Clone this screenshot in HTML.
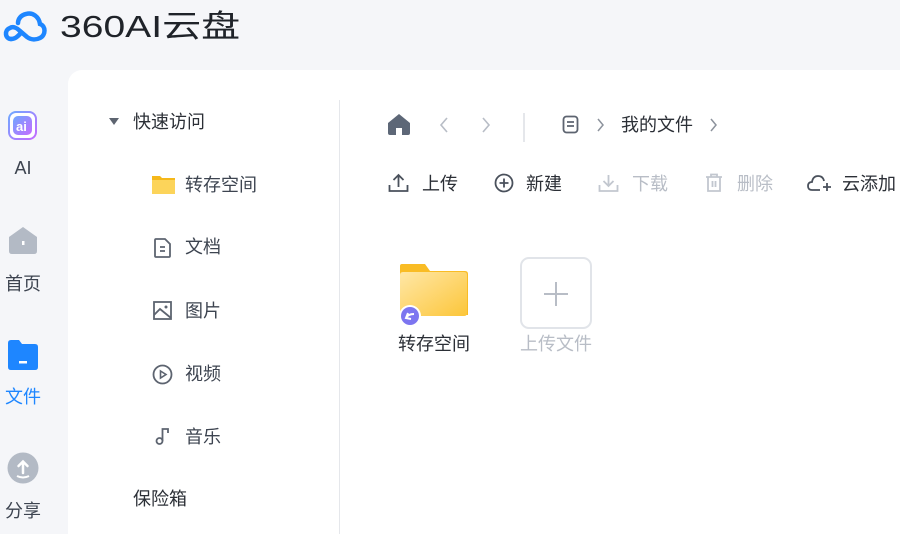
<!DOCTYPE html>
<html><head><meta charset="utf-8"><style>
*{margin:0;padding:0;box-sizing:border-box}
html,body{width:900px;height:534px;overflow:hidden}
body{background:#f5f6f9;font-family:"Liberation Sans","Noto Sans CJK SC",sans-serif;position:relative;color:#2b2f36}
.abs{position:absolute}
.logo{left:60px;top:7px;font-size:31px;font-weight:normal;color:#1f2329;line-height:40px;transform:scaleX(1.26);transform-origin:0 0;white-space:nowrap}
.nav{left:0;width:46px;text-align:center;font-size:18px;line-height:26px;color:#3d4450}
.panel{left:68px;top:70px;width:840px;height:470px;background:#fff;border-top-left-radius:14px}
.div{left:339px;top:100px;width:1px;height:434px;background:#e5e7eb}
.t{font-size:18px;line-height:26px;color:#2b2f36;white-space:nowrap}
.g{color:#b8bdc6}
svg{position:absolute}
</style></head><body>
<svg style="left:3px;top:8px" width="46" height="36" viewBox="0 0 46 34"><path d="M8 30 C2 30 1 21 7 19 C10 17 14 19 17 22 L24 28 C28 31 33 31 37 29 C43 26 43 17 37 15 C36 8 30 3 23 5 C18 6 15 10 15 14" fill="none" stroke="#1e86ff" stroke-width="4.5" stroke-linecap="round"/><path d="M8 30 C12 30 14 28 17 25" fill="none" stroke="#1e86ff" stroke-width="4.5" stroke-linecap="round"/></svg>
<div class="abs logo">360AI云盘</div>

<svg style="left:8px;top:111px" width="30" height="30"><defs><linearGradient id="ai" x1="0" y1="0" x2="1" y2="1"><stop offset="0" stop-color="#6fa8ff"/><stop offset="1" stop-color="#c46bff"/></linearGradient></defs><rect x="1" y="1" width="27" height="27" rx="7" fill="#fff" stroke="url(#ai)" stroke-width="2"/><rect x="5" y="5" width="19" height="19" rx="5" fill="url(#ai)"/><text x="8" y="20" font-size="13" font-weight="bold" fill="#fff" font-family="Liberation Sans">ai</text></svg>
<div class="abs nav" style="top:155px">AI</div>
<svg style="left:8px;top:226px" width="30" height="28"><path d="M1 11 L15 1 L29 11 V25 Q29 28 26 28 H4 Q1 28 1 25Z" fill="#b3bac5"/><rect x="14" y="15" width="2.5" height="4" fill="#fff"/></svg>
<div class="abs nav" style="top:271px">首页</div>
<svg style="left:8px;top:340px" width="30" height="30"><path d="M0 3 Q0 0 3 0 H11 L14 4 H27 Q30 4 30 7 V27 Q30 30 27 30 H3 Q0 30 0 27Z" fill="#1e86ff"/><rect x="11" y="21" width="8" height="2.5" fill="#fff"/></svg>
<div class="abs nav" style="top:384px;color:#1e86ff">文件</div>
<svg style="left:7px;top:452px" width="32" height="32"><circle cx="16" cy="16" r="15.5" fill="#b3bac5"/><path d="M16 21 V10 M11.5 14 L16 9.5 L20.5 14" stroke="#fff" stroke-width="2.5" fill="none" stroke-linecap="round"/><path d="M10 24 Q16 27 22 24" stroke="#fff" stroke-width="2" fill="none"/></svg>
<div class="abs nav" style="top:498px">分享</div>

<div class="abs panel"></div>
<div class="abs div"></div>

<svg style="left:109px;top:118px" width="10" height="8"><path d="M0 0 H10 L5 7Z" fill="#5d6470"/></svg>
<div class="abs t" style="left:133px;top:109px">快速访问</div>
<svg style="left:152px;top:176px" width="23" height="18"><path d="M0 0 H8 L10 2 H23 V18 H0Z" fill="#f5b81a"/><rect x="0" y="4" width="23" height="14" fill="#fcd45a"/></svg>
<div class="abs t" style="left:185px;top:172px;color:#3d4450">转存空间</div>
<svg style="left:154px;top:238px" width="18" height="20"><path d="M2 1 H11 L16 6 V18 Q16 19 15 19 H2 Q1 19 1 18 V2 Q1 1 2 1Z" fill="none" stroke="#5d6470" stroke-width="1.8"/><path d="M6 9 H11 M6 13 H11" stroke="#5d6470" stroke-width="1.8"/></svg>
<div class="abs t" style="left:185px;top:234px;color:#3d4450">文档</div>
<svg style="left:153px;top:301px" width="20" height="20"><rect x="1" y="1" width="17" height="17" fill="none" stroke="#5d6470" stroke-width="1.8"/><circle cx="13" cy="6" r="1.5" fill="#5d6470"/><path d="M1 14 L7 8 L18 17" fill="none" stroke="#5d6470" stroke-width="1.8"/></svg>
<div class="abs t" style="left:185px;top:298px;color:#3d4450">图片</div>
<svg style="left:152px;top:364px" width="21" height="21"><circle cx="10.5" cy="10.5" r="9" fill="none" stroke="#5d6470" stroke-width="1.8"/><path d="M8.5 7 L14 10.5 L8.5 14Z" fill="none" stroke="#5d6470" stroke-width="1.6"/></svg>
<div class="abs t" style="left:185px;top:361px;color:#3d4450">视频</div>
<svg style="left:155px;top:427px" width="16" height="19"><circle cx="4.5" cy="14" r="3" fill="none" stroke="#5d6470" stroke-width="1.8"/><path d="M7.5 14 V2 H13 V6" fill="none" stroke="#5d6470" stroke-width="1.8"/></svg>
<div class="abs t" style="left:185px;top:424px;color:#3d4450">音乐</div>
<div class="abs t" style="left:133px;top:486px">保险箱</div>

<svg style="left:387px;top:113px" width="24" height="23"><path d="M1 10 L12 1 L23 10 V20 Q23 22 21 22 H15 V15 H9 V22 H3 Q1 22 1 20Z" fill="#5d6777"/></svg>
<svg style="left:438px;top:117px" width="12" height="16"><path d="M9 1 L3 8 L9 15" fill="none" stroke="#b8bdc6" stroke-width="1.6"/></svg>
<svg style="left:480px;top:117px" width="12" height="16"><path d="M3 1 L9 8 L3 15" fill="none" stroke="#b8bdc6" stroke-width="1.6"/></svg>
<div class="abs" style="left:523px;top:113px;width:2px;height:29px;background:#e5e7eb"></div>
<svg style="left:562px;top:115px" width="18" height="20"><rect x="1.5" y="1.5" width="14" height="16" rx="3" fill="none" stroke="#5d6470" stroke-width="1.8"/><path d="M5 7 H12 M5 11 H12" stroke="#5d6470" stroke-width="1.8"/></svg>
<svg style="left:596px;top:118px" width="10" height="14"><path d="M2 1 L7 7 L2 13" fill="none" stroke="#8c929c" stroke-width="1.5"/></svg>
<div class="abs t" style="left:621px;top:112px">我的文件</div>
<svg style="left:709px;top:118px" width="10" height="14"><path d="M2 1 L7 7 L2 13" fill="none" stroke="#8c929c" stroke-width="1.5"/></svg>

<svg style="left:388px;top:173px" width="21" height="20"><path d="M10.5 14 V2 M5.5 7 L10.5 2 L15.5 7 M1.5 12 V18 H19.5 V12" fill="none" stroke="#4a515c" stroke-width="1.8"/></svg>
<div class="abs t" style="left:422px;top:171px">上传</div>
<svg style="left:494px;top:173px" width="20" height="20"><circle cx="10" cy="10" r="8.5" fill="none" stroke="#4a515c" stroke-width="1.8"/><path d="M10 5.5 V14.5 M5.5 10 H14.5" stroke="#4a515c" stroke-width="1.8"/></svg>
<div class="abs t" style="left:526px;top:171px">新建</div>
<svg style="left:598px;top:173px" width="21" height="20"><path d="M10.5 2 V13 M5.5 8 L10.5 13 L15.5 8 M1.5 12 V18 H19.5 V12" fill="none" stroke="#c2c7cf" stroke-width="1.8"/></svg>
<div class="abs t g" style="left:632px;top:171px">下载</div>
<svg style="left:705px;top:173px" width="18" height="20"><path d="M1 4 H17 M6 4 V1.5 H12 V4 M3 4 V18 H15 V4 M7.5 8 V14 M10.5 8 V14" fill="none" stroke="#c2c7cf" stroke-width="1.8"/></svg>
<div class="abs t g" style="left:737px;top:171px">删除</div>
<svg style="left:807px;top:173px" width="25" height="20"><path d="M13 17 H5 Q1 17 1 13 Q1 9 5 9 Q6 3 11 3 Q16 3 17 8" fill="none" stroke="#4a515c" stroke-width="1.8"/><path d="M20 10 V18 M16 14 H24" stroke="#4a515c" stroke-width="1.8"/></svg>
<div class="abs t" style="left:842px;top:171px">云添加</div>

<svg style="left:399px;top:263px" width="70" height="66"><defs><linearGradient id="fd" x1="0" y1="0" x2="1" y2="1"><stop offset="0" stop-color="#ffe7a6"/><stop offset="1" stop-color="#fcc63a"/></linearGradient></defs><path d="M1 3 Q1 1 3 1 H26 L31 8 H66 Q69 8 69 11 V52 H1Z" fill="#f9bc25"/><path d="M1 12 Q1 9 4 9 H65 Q68 9 68 12 V50 Q68 53 65 53 H4 Q1 53 1 50Z" fill="url(#fd)"/><circle cx="11" cy="53" r="11" fill="#fff"/><circle cx="11" cy="53" r="9" fill="#7c75f0"/><path d="M7 55 Q9 51 15 51 M9 50 L7 55 L12 56" stroke="#fff" stroke-width="2" fill="none"/></svg>
<div class="abs t" style="left:398px;top:331px">转存空间</div>
<div class="abs" style="left:520px;top:257px;width:72px;height:72px;border:2px solid #e1e4e9;border-radius:9px"></div>
<svg style="left:543px;top:281px" width="26" height="26"><path d="M13 1 V25 M1 13 H25" stroke="#b8bdc6" stroke-width="2"/></svg>
<div class="abs t g" style="left:520px;top:331px">上传文件</div>
</body></html>
